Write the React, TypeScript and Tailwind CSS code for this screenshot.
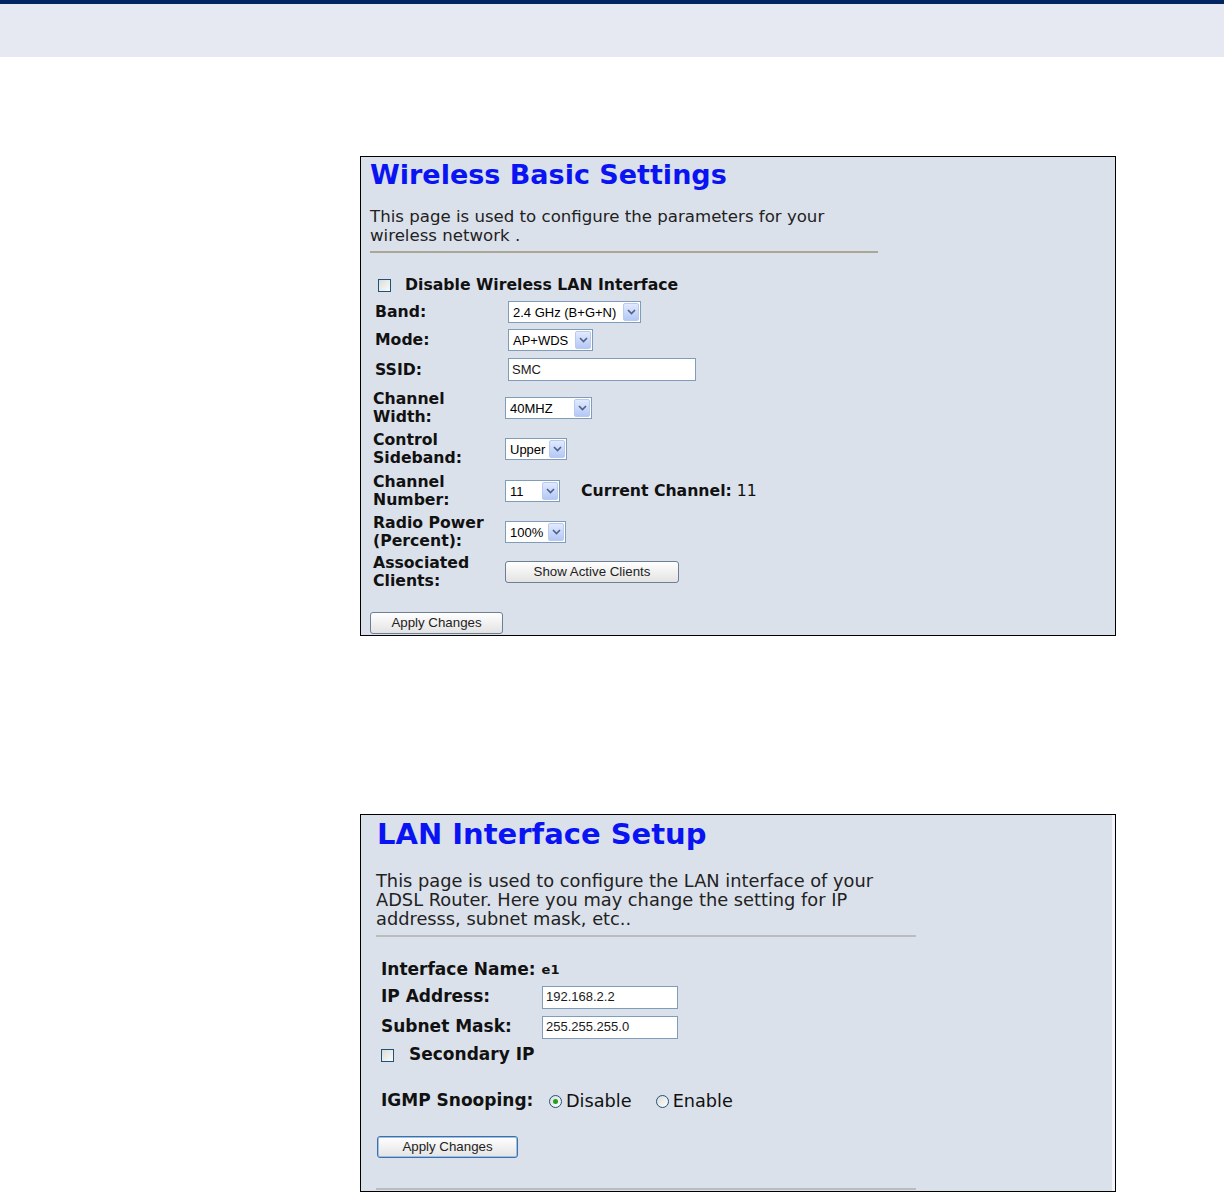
import React from "react";

const V = { fontFamily: '"DejaVu Sans", Verdana, sans-serif' };
const A = { fontFamily: '"Liberation Sans", Arial, sans-serif' };

function Arrow() {
  return (
    <span className="flex h-full w-[16px] items-center justify-center rounded-[2px] border border-[#b9c9ef] bg-gradient-to-b from-[#e1eafe] to-[#b4c8f6]">
      <svg width="9" height="6" viewBox="0 0 9 6">
        <path d="M1 1 L4.5 4.5 L8 1" stroke="#4d6185" strokeWidth="1.6" fill="none" />
      </svg>
    </span>
  );
}

function Select({ value, w }: { value: string; w: number }) {
  return (
    <div
      className="flex h-[22px] items-stretch border border-[#7f9db9] bg-white p-[1px] text-[13px] text-black"
      style={{ ...A, width: w }}
    >
      <span className="flex flex-1 items-center pl-[3px] leading-none">{value}</span>
      <Arrow />
    </div>
  );
}

function TextInput({ value, w }: { value: string; w: number }) {
  return (
    <div
      className="flex h-[23px] items-center border border-[#7f9db9] bg-white pl-[3px] text-[13px] text-[#1a1a1a]"
      style={{ ...A, width: w }}
    >
      {value}
    </div>
  );
}

function Button({ label, w, blue = false }: { label: string; w: number; blue?: boolean }) {
  return (
    <div
      className={
        "flex h-[22px] items-center justify-center rounded-[3px] border bg-gradient-to-b from-white to-[#e3e3e3] text-[13.3px] text-[#222] " +
        (blue ? "border-[#3d6fa8] shadow-[inset_0_0_0_1px_#9cc0ea]" : "border-[#6f7f93]")
      }
      style={{ ...A, width: w }}
    >
      {label}
    </div>
  );
}

function Checkbox() {
  return (
    <span className="inline-block h-[13px] w-[13px] shrink-0 border border-[#1c5180] bg-gradient-to-br from-[#dcdcd7] to-[#fbfbf9]" />
  );
}

function Radio({ checked }: { checked?: boolean }) {
  return (
    <span className="inline-flex h-[13px] w-[13px] shrink-0 items-center justify-center rounded-full border border-[#1c5180] bg-gradient-to-br from-[#dcdcd7] to-[#ffffff]">
      {checked && <span className="h-[5px] w-[5px] rounded-full bg-[#21a121]" />}
    </span>
  );
}

function Label({ children, w }: { children: React.ReactNode; w: number }) {
  return (
    <div className="shrink-0 text-[15.7px] font-bold leading-[18px] text-[#111]" style={{ width: w }}>
      {children}
    </div>
  );
}

export default function App() {
  return (
    <div className="min-h-[1192px] w-[1224px] bg-white" style={V}>
      <div className="h-[4px] bg-[#002561]" />
      <div className="h-[53px] bg-[#e6e9f2]" />

      {/* Panel 1 */}
      <div className="ml-[360px] mt-[99px] h-[480px] w-[756px] border border-black bg-[#dbe1eb] pl-[9px]">
        <div className="h-[36px] pt-[1px] text-[27px] font-bold leading-[34px] text-[#0a14f2]">
          Wireless Basic Settings
        </div>
        <div className="mt-[14px] text-[16.6px] leading-[19px] text-[#222]">
          This page is used to configure the parameters for your
          <br />
          wireless network .
        </div>
        <div className="mt-[6px] h-[2px] w-[508px] bg-[#aba797]" />

        <div className="mt-[21px] flex h-[22px] items-center pl-[8px]">
          <Checkbox />
          <span className="ml-[14px] text-[15.7px] font-bold text-[#111]">Disable Wireless LAN Interface</span>
        </div>

        <div className="mt-[5px] flex h-[22px] items-center pl-[5px]">
          <Label w={133}>Band:</Label>
          <Select value="2.4 GHz (B+G+N)" w={133} />
        </div>
        <div className="mt-[6px] flex h-[22px] items-center pl-[5px]">
          <Label w={133}>Mode:</Label>
          <Select value="AP+WDS" w={85} />
        </div>
        <div className="mt-[7px] flex h-[23px] items-center pl-[5px]">
          <Label w={133}>SSID:</Label>
          <TextInput value="SMC" w={188} />
        </div>

        <div className="mt-[9px] flex h-[36px] items-center pl-[3px]">
          <Label w={132}>
            Channel
            <br />
            Width:
          </Label>
          <Select value="40MHZ" w={87} />
        </div>
        <div className="mt-[5px] flex h-[36px] items-center pl-[3px]">
          <Label w={132}>
            Control
            <br />
            Sideband:
          </Label>
          <Select value="Upper" w={62} />
        </div>
        <div className="mt-[6px] flex h-[36px] items-center pl-[3px]">
          <Label w={132}>
            Channel
            <br />
            Number:
          </Label>
          <Select value="11" w={55} />
          <span className="ml-[21px] text-[15.7px] text-[#111]">
            <b>Current Channel:</b> 11
          </span>
        </div>
        <div className="mt-[5px] flex h-[36px] items-center pl-[3px]">
          <Label w={132}>
            Radio Power
            <br />
            (Percent):
          </Label>
          <Select value="100%" w={61} />
        </div>
        <div className="mt-[4px] flex h-[36px] items-center pl-[3px]">
          <Label w={132}>
            Associated
            <br />
            Clients:
          </Label>
          <Button label="Show Active Clients" w={174} />
        </div>

        <div className="mt-[22px]">
          <Button label="Apply Changes" w={133} />
        </div>
      </div>

      {/* Panel 2 */}
      <div className="ml-[360px] mt-[178px] h-[378px] w-[756px] border border-black bg-[#dbe1eb]">
        <div className="flex h-full border-r-[3px] border-r-[#f4f5f8]">
          <div className="flex h-full flex-1 flex-col pl-[15px]">
            <div className="h-[36px] pt-[1px] pl-[1px] text-[29px] font-bold leading-[36px] text-[#0a14f2]">
              LAN Interface Setup
            </div>
            <div className="mt-[20px] text-[17.8px] leading-[19px] text-[#222]">
              This page is used to configure the LAN interface of your
              <br />
              ADSL Router. Here you may change the setting for IP
              <br />
              addresss, subnet mask, etc..
            </div>
            <div className="mt-[7px] h-[2px] w-[540px] bg-[#bcbcbc]" />

            <div className="mt-[22px] flex h-[22px] items-center pl-[5px]">
              <span className="text-[17px] font-bold text-[#111]">Interface Name:</span>
              <span className="ml-[6px] text-[13px] font-bold text-[#111]">e1</span>
            </div>
            <div className="mt-[4px] flex h-[24px] items-center pl-[5px]">
              <div className="w-[161px] shrink-0 text-[17px] font-bold text-[#111]">IP Address:</div>
              <TextInput value="192.168.2.2" w={136} />
            </div>
            <div className="mt-[6px] flex h-[24px] items-center pl-[5px]">
              <div className="w-[161px] shrink-0 text-[17px] font-bold text-[#111]">Subnet Mask:</div>
              <TextInput value="255.255.255.0" w={136} />
            </div>
            <div className="mt-[5px] flex h-[22px] items-center pl-[5px]">
              <Checkbox />
              <span className="ml-[15px] text-[17px] font-bold text-[#111]">Secondary IP</span>
            </div>

            <div className="mt-[23px] flex h-[24px] items-center pl-[5px]">
              <span className="w-[168px] shrink-0 text-[17px] font-bold text-[#111]">IGMP Snooping:</span>
              <Radio checked />
              <span className="ml-[4px] text-[17.7px] text-[#111]">Disable</span>
              <span className="ml-[24px] flex">
                <Radio />
              </span>
              <span className="ml-[4px] text-[17.7px] text-[#111]">Enable</span>
            </div>

            <div className="mt-[23px] pl-[1px]">
              <Button label="Apply Changes" w={141} blue />
            </div>
            <div className="flex-1" />
            <div className="mb-[1px] h-[2px] w-[540px] bg-[#bcbcbc]" />
          </div>
        </div>
      </div>
    </div>
  );
}
